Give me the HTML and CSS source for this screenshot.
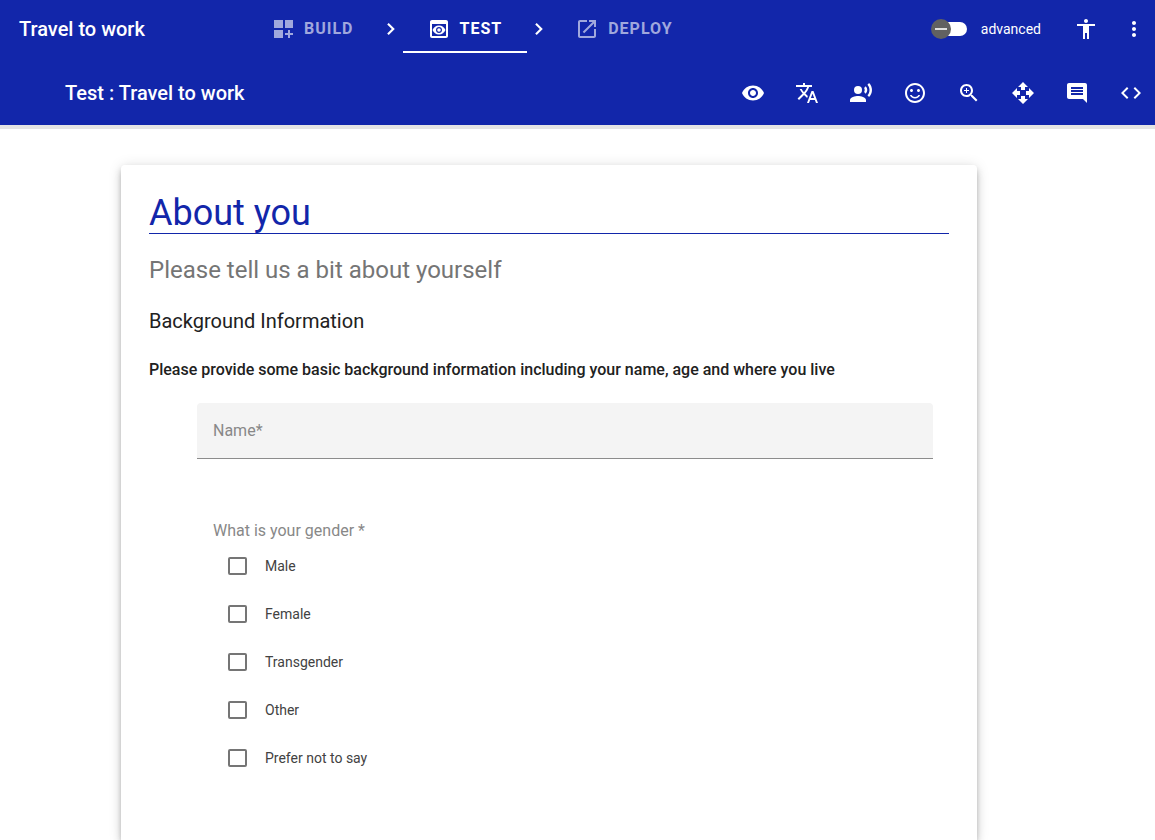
FILE: index.html
```html
<!DOCTYPE html>
<html lang="en">
<head>
<meta charset="utf-8">
<meta name="viewport" content="width=device-width, initial-scale=1">
<title>Test : Travel to work</title>
<link rel="stylesheet" href="styles.css">
</head>
<body>
<header class="header">
  <div class="topbar">
    <div class="title topbar-title">Travel to work</div>
    <nav class="steps" aria-label="Project steps">
      <button class="step" type="button">
        <svg class="icon" viewBox="0 0 24 24"><path d="M3 3h9v8H3zM14 3h8v8h-8zM3 13h9v8H3zM17 13h2v3h3v2h-3v3h-2v-3h-3v-2h3z"/></svg>
        <span>BUILD</span>
      </button>
      <svg class="icon" viewBox="0 0 24 24"><path d="M9.700 6 8.200 7.500 12.800 12l-4.600 4.500L9.700 18l6.100-6z"/></svg>
      <button class="step step-active" type="button" aria-current="step">
        <svg class="icon" viewBox="0 0 24 24"><path d="M19 3H5c-1.110 0-2 .9-2 2v14c0 1.100.89 2 2 2h14c1.100 0 2-.9 2-2V5c0-1.100-.9-2-2-2zm0 16H5V7h14v12zM12 8.500c-3 0-5.400 1.800-6.500 4.500 1.100 2.700 3.500 4.500 6.500 4.500s5.400-1.800 6.500-4.500c-1.100-2.700-3.500-4.500-6.500-4.500zm0 7.500c-1.700 0-3-1.300-3-3s1.300-3 3-3 3 1.300 3 3-1.300 3-3 3zm0-4.800a1.800 1.800 0 1 0 0 3.600 1.800 1.800 0 0 0 0-3.600z"/></svg>
        <span>TEST</span>
      </button>
      <svg class="icon" viewBox="0 0 24 24"><path d="M9.700 6 8.200 7.500 12.800 12l-4.600 4.500L9.700 18l6.100-6z"/></svg>
      <button class="step" type="button">
        <svg class="icon" viewBox="0 0 24 24"><path d="M19 19H5V5h7V3H5c-1.110 0-2 .9-2 2v14c0 1.100.89 2 2 2h14c1.100 0 2-.9 2-2v-7h-2v7zM14 3v2h3.590l-9.830 9.830 1.410 1.410L19 6.410V10h2V3h-7z"/></svg>
        <span>DEPLOY</span>
      </button>
    </nav>
    <div class="topbar-end">
      <label class="toggle"><input class="switch" type="checkbox" role="switch"><span>advanced</span></label>
      <button class="icon-button" type="button" aria-label="Accessibility"><svg class="icon" viewBox="0 0 24 24"><path d="M12 2c1.100 0 2 .9 2 2s-.9 2-2 2-2-.9-2-2 .9-2 2-2zm9 7h-6v13h-2v-6h-2v6H9V9H3V7h18v2z"/></svg></button>
      <button class="icon-button" type="button" aria-label="More options"><svg class="icon" viewBox="0 0 24 24"><path d="M12 8c1.100 0 2-.9 2-2s-.9-2-2-2-2 .9-2 2 .9 2 2 2zm0 2c-1.100 0-2 .9-2 2s.9 2 2 2 2-.9 2-2-.9-2-2-2zm0 6c-1.100 0-2 .9-2 2s.9 2 2 2 2-.9 2-2-.9-2-2-2z"/></svg></button>
    </div>
  </div>
  <div class="toolbar">
    <div class="title">Test : Travel to work</div>
    <div class="tools">
      <button class="icon-button" type="button" aria-label="View"><svg class="icon" viewBox="0 0 24 24"><path d="M12 4.500C7 4.500 2.730 7.610 1 12c1.730 4.390 6 7.500 11 7.500s9.270-3.110 11-7.500c-1.730-4.390-6-7.500-11-7.500zM12 17c-2.760 0-5-2.240-5-5s2.240-5 5-5 5 2.240 5 5-2.240 5-5 5zm0-8c-1.660 0-3 1.340-3 3s1.340 3 3 3 3-1.340 3-3-1.340-3-3-3z"/></svg></button>
      <button class="icon-button" type="button" aria-label="Translate"><svg class="icon" viewBox="0 0 24 24"><path d="m12.870 15.070-2.540-2.510.03-.03c1.740-1.940 2.980-4.170 3.710-6.530H17V4h-7V2H8v2H1v1.990h11.170C11.500 7.920 10.440 9.750 9 11.350 8.070 10.320 7.300 9.190 6.690 8h-2c.73 1.630 1.730 3.170 2.980 4.560l-5.090 5.020L4 19l5-5 3.110 3.110.76-2.040zM18.500 10h-2L12 22h2l1.120-3h4.750L21 22h2l-4.500-12zm-2.620 7 1.620-4.330L19.120 17h-3.240z"/></svg></button>
      <button class="icon-button" type="button" aria-label="Read aloud"><svg class="icon" viewBox="0 0 24 24"><circle cx="9" cy="9" r="4"/><path d="M9 15c-2.670 0-8 1.340-8 4v2h16v-2c0-2.660-5.330-4-8-4zm7.760-9.640-1.680 1.690c.84 1.180.84 2.710 0 3.890l1.680 1.690c2.020-2.020 2.020-5.070 0-7.270zM20.070 2l-1.630 1.630c2.770 3.020 2.770 7.560 0 10.740L20.070 16c3.900-3.890 3.910-9.950 0-14z"/></svg></button>
      <button class="icon-button" type="button" aria-label="Feedback"><svg class="icon" viewBox="0 0 24 24"><path d="M11.990 2C6.470 2 2 6.480 2 12s4.470 10 9.990 10C17.520 22 22 17.520 22 12S17.520 2 11.990 2zM12 20c-4.420 0-8-3.580-8-8s3.580-8 8-8 8 3.580 8 8-3.580 8-8 8zm3.500-9c.83 0 1.500-.67 1.500-1.500S16.330 8 15.500 8 14 8.670 14 9.500s.67 1.500 1.500 1.500zm-7 0c.83 0 1.500-.67 1.500-1.500S9.330 8 8.500 8 7 8.670 7 9.500 7.670 11 8.500 11zm3.500 5c-1.480 0-2.750-.81-3.450-2H6.880c.8 2.050 2.790 3.500 5.120 3.500s4.320-1.450 5.120-3.500h-1.670c-.69 1.190-1.970 2-3.450 2z"/></svg></button>
      <button class="icon-button" type="button" aria-label="Zoom in"><svg class="icon" viewBox="0 0 24 24"><path d="M15.500 14h-.79l-.28-.27C15.410 12.590 16 11.110 16 9.500 16 5.910 13.090 3 9.500 3S3 5.910 3 9.500 5.910 16 9.500 16c1.610 0 3.090-.59 4.230-1.570l.27.28v.79l5 4.990L20.490 19l-4.990-5zm-6 0C7.010 14 5 11.990 5 9.500S7.010 5 9.500 5 14 7.010 14 9.500 11.990 14 9.500 14zm2.500-4h-2v2H9v-2H7V9h2V7h1v2h2v1z"/></svg></button>
      <button class="icon-button" type="button" aria-label="Move"><svg class="icon" viewBox="0 0 24 24"><path d="M10 9h4V6h3l-5-5-5 5h3v3zm-1 1H6V7l-5 5 5 5v-3h3v-4zm14 2-5-5v3h-3v4h3v3l5-5zm-9 3h-4v3H7l5 5 5-5h-3v-3z"/></svg></button>
      <button class="icon-button" type="button" aria-label="Comments"><svg class="icon" viewBox="0 0 24 24"><path d="M21.990 4c0-1.100-.89-2-1.990-2H4c-1.100 0-2 .9-2 2v12c0 1.100.9 2 2 2h14l4 4-.01-18zM18 14H6v-2h12v2zm0-3H6V9h12v2zm0-3H6V6h12v2z"/></svg></button>
      <button class="icon-button" type="button" aria-label="Code"><svg class="icon" viewBox="0 0 24 24"><path d="M9.400 16.600 4.800 12l4.600-4.600L8 6l-6 6 6 6 1.400-1.400zm5.200 0 4.600-4.600-4.600-4.600L16 6l6 6-6 6-1.400-1.400z"/></svg></button>
    </div>
  </div>
</header>
<main class="page">
  <form class="card">
    <h1 class="heading">About you</h1>
    <p class="subtitle">Please tell us a bit about yourself</p>
    <h2 class="section-title">Background Information</h2>
    <p class="description">Please provide some basic background information including your name, age and where you live</p>
    <div class="fields">
      <div class="text-field">
        <input class="text-input" id="name" type="text" required>
        <label class="text-label" for="name">Name*</label>
      </div>
      <fieldset class="choices">
        <legend class="legend">What is your gender *</legend>
        <label class="choice"><input class="checkbox" type="checkbox" name="gender"><span>Male</span></label>
        <label class="choice"><input class="checkbox" type="checkbox" name="gender"><span>Female</span></label>
        <label class="choice"><input class="checkbox" type="checkbox" name="gender"><span>Transgender</span></label>
        <label class="choice"><input class="checkbox" type="checkbox" name="gender"><span>Other</span></label>
        <label class="choice"><input class="checkbox" type="checkbox" name="gender"><span>Prefer not to say</span></label>
      </fieldset>
    </div>
  </form>
</main>
</body>
</html>
```
FILE: styles.css
```css
* {
  box-sizing: border-box;
}

body {
  display: flex;
  flex-direction: column;
  min-height: 100vh;
  margin: 0;
  background: #fff;
  color: #212121;
  font-family: Roboto, sans-serif;
  font-size: 16px;
}

button {
  margin: 0;
  padding: 0;
  border: 0;
  background: none;
  color: inherit;
  font: inherit;
  cursor: pointer;
}

.header {
  border-bottom: 4px solid #e4e4e4;
  background: #1226aa;
  color: #fff;
}

.topbar {
  display: flex;
  align-items: center;
  height: 61px;
  padding: 0 9px 4px 19px;
}

.title {
  font-size: 20px;
  font-weight: 500;
  line-height: 32px;
}

.topbar-title {
  width: 228px;
}

.icon {
  display: block;
  flex: none;
  width: 24px;
  height: 24px;
  fill: currentColor;
}

.steps {
  display: flex;
  align-items: center;
}

.step {
  display: flex;
  align-items: center;
  gap: 9px;
  height: 49px;
  padding: 0 25px 0 24px;
  border: solid transparent;
  border-width: 2px 0;
  color: #a0a8dd;
  font-weight: 700;
  letter-spacing: 1px;
}

.step-active {
  border-bottom-color: #fff;
  color: #fff;
}

.topbar-end {
  display: flex;
  align-items: center;
  gap: 24px;
  margin-left: auto;
}

.toggle {
  display: flex;
  align-items: center;
  gap: 14px;
  margin-right: 9px;
  font-size: 14px;
}

.switch {
  display: flex;
  align-items: center;
  appearance: none;
  width: 32px;
  height: 14px;
  margin: 0;
  border-radius: 7px;
  background: #fff;
}

.switch::before {
  content: "";
  flex: none;
  width: 20px;
  height: 20px;
  margin-left: -4px;
  border-radius: 50%;
  background: linear-gradient(#e0e0e0, #e0e0e0) center / 12px 2px no-repeat #616161;
}

.switch:checked {
  justify-content: flex-end;
}

.toolbar {
  display: flex;
  align-items: center;
  justify-content: space-between;
  height: 64px;
  padding: 0 12px 0 65px;
}

.tools {
  display: flex;
  gap: 30px;
}

.page {
  display: flex;
  flex: 1;
  justify-content: center;
  padding: 36px 57px 0 0;
}

.card {
  width: 100%;
  max-width: 856px;
  padding: 28px 28px 56px;
  border-radius: 4px 4px 0 0;
  box-shadow: 0 3px 5px -1px rgba(0, 0, 0, .2), 0 5px 8px rgba(0, 0, 0, .14), 0 1px 14px rgba(0, 0, 0, .12);
}

.heading {
  margin: 0;
  border-bottom: 1px solid #1226aa;
  color: #1226aa;
  font-size: 36px;
  font-weight: 400;
  line-height: 40px;
}

.subtitle {
  margin: 20px 0 19px;
  color: #757575;
  font-size: 24px;
  line-height: 32px;
}

.section-title {
  margin: 0 0 21px;
  font-size: 20px;
  font-weight: 400;
  line-height: 32px;
}

.description {
  margin: 0 0 21px;
  font-weight: 500;
  line-height: 24px;
}

.fields {
  padding: 0 16px 0 48px;
}

.text-field {
  display: grid;
  height: 56px;
  border-bottom: 1px solid #8c8c8c;
  border-radius: 4px 4px 0 0;
  background: #f4f4f4;
}

.text-input,
.text-label {
  grid-area: 1 / 1;
  padding: 0 16px;
}

.text-input {
  width: 100%;
  border: 0;
  background: none;
  font: inherit;
}

.text-label {
  align-self: center;
  color: #888;
  pointer-events: none;
}

.text-input:focus + .text-label,
.text-input:valid + .text-label {
  align-self: start;
  font-size: 12px;
}

.choices {
  margin: 61px 0 0;
  padding: 0 16px;
  border: 0;
}

.legend {
  padding: 0;
  color: #888;
  line-height: 22px;
}

.choice {
  display: flex;
  align-items: center;
  gap: 18px;
  height: 48px;
  padding-left: 15px;
  color: #424242;
  font-size: 14px;
}

.checkbox {
  appearance: none;
  width: 19px;
  height: 18px;
  margin: 0;
  border: 2px solid #757575;
  border-radius: 2px;
}

.checkbox:checked {
  background: #1226aa;
}
```
